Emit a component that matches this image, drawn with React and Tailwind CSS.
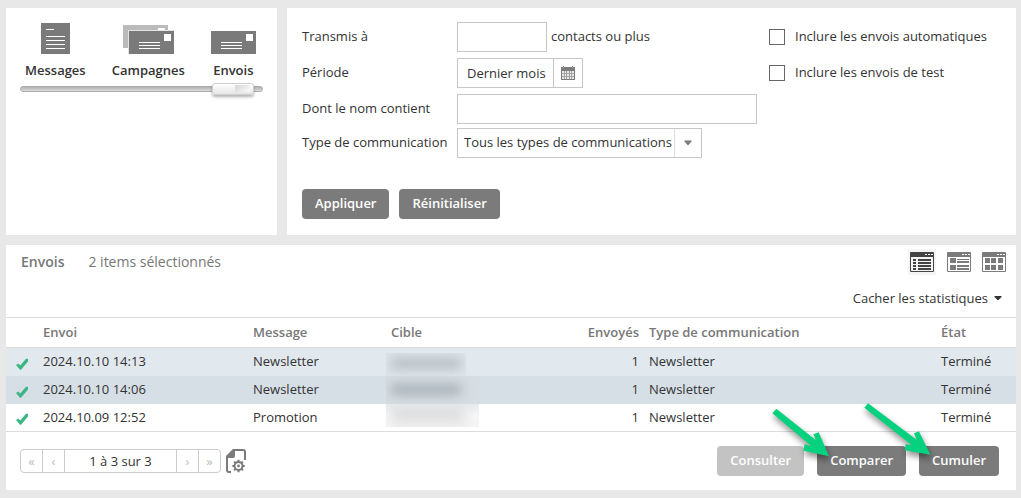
import clsx from "clsx";

const SENDINGS = [
  { date: "2024.10.10 14:13", message: "Newsletter", sent: 1, type: "Newsletter", state: "Terminé" },
  { date: "2024.10.10 14:06", message: "Newsletter", sent: 1, type: "Newsletter", state: "Terminé" },
  { date: "2024.10.09 12:52", message: "Promotion", sent: 1, type: "Newsletter", state: "Terminé" },
];

const ROW_BG = ["bg-[#e1e8ee]", "bg-[#d7dfe6]", "bg-white"];

// Hidden recipients: wash behind the name, then the blurred name itself
const TARGET_WASH = [
  "w-20 bg-[#dce2e6]/60",
  "w-[93px] bg-[#d6dde3]",
  "w-[93px] bg-linear-to-b from-[#e6eaed] via-[#f7f7f7] to-[#f3f3f3]",
];
const TARGET_BAR = ["w-[72px] bg-[#a3abb1]/70", "w-[72px] bg-[#929ba3]/70", "w-[76px] bg-[#b9b9b9]/50"];

function MessageIcon() {
  return (
    <svg width="29" height="31" viewBox="0 0 29 31" shapeRendering="crispEdges">
      <rect width="29" height="31" fill="#7a7a7a" />
      <path fill="#fff" d="M5 6h8v1H5zM5 13h19v1H5zM5 17h19v1H5zM5 21h19v1H5zM5 25h19v1H5z" />
    </svg>
  );
}

function CampaignIcon() {
  return (
    <svg width="51" height="29" viewBox="0 0 51 29" shapeRendering="crispEdges">
      <rect width="45" height="23" fill="#bbb" />
      <rect x="35" y="3" width="7" height="3" fill="#fff" />
      <rect x="5" y="5" width="46" height="24" fill="#e3e3e3" />
      <rect x="6" y="6" width="45" height="23" fill="#7a7a7a" />
      <path fill="#fff" d="M41 9h7v7h-7zM16 17h21v1H16zM16 20h21v1H16zM16 23h21v1H16z" />
    </svg>
  );
}

function SendingIcon() {
  return (
    <svg width="45" height="23" viewBox="0 0 45 23" shapeRendering="crispEdges">
      <rect width="45" height="23" fill="#7a7a7a" />
      <path fill="#fff" d="M35 3h7v7h-7zM10 11h21v1H10zM10 14h21v1H10zM10 17h21v1H10z" />
    </svg>
  );
}

function CalendarIcon() {
  return (
    <svg width="14" height="14" viewBox="0 0 14 14" shapeRendering="crispEdges">
      <path fill="#7d7d7d" d="M0 1h2V0h1v1h8V0h1v1h2v3H0z" />
      <path fill="#a9a9a9" d="M2 1h1v1H2zM11 1h1v1h-1z" />
      <rect y="4" width="14" height="10" fill="#7d7d7d" />
      <rect x="1" y="5" width="12" height="8" fill="#a5a5a5" />
      <path
        fill="#e6e6e6"
        d="M1 5h2v2H1zM4 5h1v2H4zM6 5h2v2H6zM9 5h1v2H9zM11 5h2v2h-2zM1 8h2v2H1zM4 8h1v2H4zM6 8h2v2H6zM9 8h1v2H9zM11 8h2v2h-2zM1 11h2v2H1zM4 11h1v2H4zM6 11h2v2H6zM9 11h1v2H9zM11 11h2v2h-2z"
      />
    </svg>
  );
}

function WindowIcon({ color, children }) {
  return (
    <svg width="24" height="20" viewBox="0 0 24 20" fill={color}>
      <path fillRule="evenodd" d="M1 0h22a1 1 0 0 1 1 1v18a1 1 0 0 1-1 1H1a1 1 0 0 1-1-1V1a1 1 0 0 1 1-1zM1 5v14h22V5z" />
      <path fill="#fff" d="M15 2h2v1h-2zM18 2h2v1h-2zM21 2h2v1h-2z" />
      {children}
    </svg>
  );
}

function CheckIcon() {
  return (
    <svg className="ml-[10px] mt-1" width="12" height="12" viewBox="0 0 12 12">
      <path fill="#3cb683" d="M0 7 2.4 5.6 4.2 7.6 10 0.8H12V3.4L5 11.8H4z" />
    </svg>
  );
}

function PageSettingsIcon() {
  return (
    <svg width="20" height="24" viewBox="0 0 20 24" fill="none" stroke="#7b7b7b">
      <path strokeWidth="2" d="M5 23H3a2 2 0 0 1-2-2V8L8 1h9a2 2 0 0 1 2 2v8" />
      <path fill="#7b7b7b" stroke="none" d="M0 9V7L7 0h2v7a2 2 0 0 1-2 2z" />
      <circle cx="12.5" cy="17" r="4" strokeWidth="2" />
      <circle cx="12.5" cy="17" r="1.4" fill="#7b7b7b" stroke="none" />
      <path
        strokeWidth="2"
        d="M12.5 10.8v2M12.5 21.2v2M6.3 17h2M16.7 17h2M8.1 12.6l1.4 1.4M15.5 20l1.4 1.4M8.1 21.4 9.5 20M15.5 14l1.4-1.4"
      />
    </svg>
  );
}

function Button({ children, disabled }) {
  return (
    <button
      type="button"
      disabled={disabled}
      className={clsx(
        "h-[30px] rounded px-[13px] font-semibold text-white",
        disabled ? "bg-[#c3c3c3]" : "bg-[#7b7b7b] hover:bg-[#6b6b6b]"
      )}
    >
      {children}
    </button>
  );
}

function TypeSwitch() {
  return (
    <section className="w-[271px] shrink-0 bg-white px-[14px] pt-[15px]">
      <div className="flex items-end gap-[26px] pl-[5px] font-semibold">
        <button type="button" className="flex flex-col items-center gap-[6px] leading-5">
          <MessageIcon />
          Messages
        </button>
        <button type="button" className="flex flex-col items-center gap-[6px] leading-5">
          <CampaignIcon />
          Campagnes
        </button>
        <button type="button" className="flex flex-col items-center gap-[6px] leading-5">
          <SendingIcon />
          Envois
        </button>
      </div>
      <input
        type="range"
        aria-label="Type de vue"
        min="0"
        max="100"
        defaultValue="96"
        className="mt-[2px] block h-[14px] w-full appearance-none bg-transparent [&::-webkit-slider-runnable-track]:h-[6px] [&::-webkit-slider-runnable-track]:rounded-full [&::-webkit-slider-runnable-track]:border [&::-webkit-slider-runnable-track]:border-[#adadad] [&::-webkit-slider-runnable-track]:bg-linear-to-b [&::-webkit-slider-runnable-track]:from-[#b0b0b0] [&::-webkit-slider-runnable-track]:to-[#dcdcdc] [&::-webkit-slider-thumb]:-mt-1 [&::-webkit-slider-thumb]:h-[12px] [&::-webkit-slider-thumb]:w-[42px] [&::-webkit-slider-thumb]:appearance-none [&::-webkit-slider-thumb]:rounded-[3px] [&::-webkit-slider-thumb]:border [&::-webkit-slider-thumb]:border-[#cfcfcf] [&::-webkit-slider-thumb]:bg-[linear-gradient(135deg,#d6d6d6,#fafafa),linear-gradient(#ffffff,#e6e6e6)] [&::-webkit-slider-thumb]:bg-[length:15px_7px,100%_100%] [&::-webkit-slider-thumb]:bg-[position:22px_1px,0_0] [&::-webkit-slider-thumb]:bg-no-repeat [&::-webkit-slider-thumb]:shadow-[0_2px_3px_rgba(0,0,0,0.3)]"
      />
    </section>
  );
}

function FieldRow({ id, label, children }) {
  return (
    <div className="flex h-[30px] items-center">
      <label htmlFor={id} className="w-[155px] shrink-0">
        {label}
      </label>
      {children}
    </div>
  );
}

function CheckField({ id, label }) {
  return (
    <div className="flex h-[30px] items-center gap-[10px]">
      <input id={id} type="checkbox" className="size-4 appearance-none border border-[#666] bg-white checked:bg-[#7b7b7b]" />
      <label htmlFor={id} className="whitespace-nowrap">{label}</label>
    </div>
  );
}

function Filters() {
  return (
    <section className="min-w-0 flex-1 bg-white px-[15px] pb-4 pt-[14px]">
      <div className="flex gap-3">
        <div>
          <div className="space-y-[6px]">
            <FieldRow id="contacts" label="Transmis à">
              <input id="contacts" type="text" className="h-[30px] w-[90px] border border-[#c6c6c6] px-2" />
              <span className="ml-1">contacts ou plus</span>
            </FieldRow>
            <FieldRow id="period" label="Période">
              <input
                id="period"
                type="text"
                defaultValue="Dernier mois"
                className="h-[30px] w-[96px] border border-r-0 border-[#c6c6c6] pl-[9px]"
              />
              <button
                type="button"
                aria-label="Choisir la période"
                className="flex h-[30px] w-[30px] items-center justify-center border border-[#c6c6c6]"
              >
                <CalendarIcon />
              </button>
            </FieldRow>
            <FieldRow id="name" label="Dont le nom contient">
              <input id="name" type="text" className="h-[30px] w-[300px] border border-[#c6c6c6] px-2" />
            </FieldRow>
          </div>
          <div className="mt-1">
            <FieldRow id="type" label="Type de communication">
              <div className="relative">
                <select id="type" className="h-[30px] w-[245px] appearance-none border border-[#c6c6c6] bg-white pl-[6px]">
                  <option>Tous les types de communications</option>
                </select>
                <span className="pointer-events-none absolute inset-y-px right-px flex w-[27px] items-center justify-center border-l border-[#dedede] bg-white">
                  <svg width="8" height="6" viewBox="0 0 8 6">
                    <path fill="#7b7b7b" d="M0.5 0.5h7v1L4.5 5h-1L0.5 1.5z" />
                  </svg>
                </span>
              </div>
            </FieldRow>
          </div>
        </div>
        <div className="space-y-[6px]">
          <CheckField id="auto" label="Inclure les envois automatiques" />
          <CheckField id="test" label="Inclure les envois de test" />
        </div>
      </div>
      <div className="mt-[31px] flex gap-[10px]">
        <Button>Appliquer</Button>
        <Button>Réinitialiser</Button>
      </div>
    </section>
  );
}

function ListHeader() {
  return (
    <header className="pl-[15px] pr-[10px] pt-1">
      <div className="flex items-center">
        <h2 className="text-sm font-semibold text-[#777]">Envois</h2>
        <p className="ml-6 text-sm text-[#777]">2 items sélectionnés</p>
        <div className="ml-auto flex items-center gap-[11px]">
          <button type="button" aria-label="Liste" className="bg-[#f5f5f5] px-[2px] py-[3px]">
            <WindowIcon color="#444">
              <path d="M3 7h3v2H3zM3 10h3v2H3zM3 13h3v2H3zM3 16h3v2H3zM8 7h13v2H8zM8 10h13v2H8zM8 13h13v2H8zM8 16h13v2H8z" />
            </WindowIcon>
          </button>
          <button type="button" aria-label="Détails">
            <WindowIcon color="#7b7b7b">
              <path d="M3 6h6v5H3zM3 13h6v5H3zM10 7h12v1H10zM10 9h12v2H10zM10 13h12v2H10zM10 16h12v2H10z" />
            </WindowIcon>
          </button>
          <button type="button" aria-label="Grille">
            <WindowIcon color="#7b7b7b">
              <path d="M3 6h5v5H3zM9 6h5v5H9zM16 6h5v5h-5zM3 13h5v5H3zM9 13h5v5H9zM16 13h5v5h-5z" />
            </WindowIcon>
          </button>
        </div>
      </div>
      <div className="flex justify-end pb-[11px] pr-1 pt-[15px]">
        <button type="button" className="flex items-center gap-[6px] leading-4">
          Cacher les statistiques
          <svg width="8" height="5" viewBox="0 0 8 5">
            <path fill="#333" d="M0.5 0h7v1L4.5 4h-1L0.5 1z" />
          </svg>
        </button>
      </div>
    </header>
  );
}

function SendingsTable() {
  return (
    <table className="w-full table-fixed text-left">
      <colgroup>
        <col className="w-[37px]" />
        <col className="w-[210px]" />
        <col className="w-[138px]" />
        <col />
        <col className="w-[80px]" />
        <col className="w-[292px]" />
        <col className="w-[75px]" />
      </colgroup>
      <thead>
        <tr className="h-[30px] border-y border-[#dcdcdc] text-[#777]">
          <td />
          <th className="font-semibold">Envoi</th>
          <th className="font-semibold">Message</th>
          <th className="font-semibold">Cible</th>
          <th className="pr-[10px] text-right font-semibold">Envoyés</th>
          <th className="font-semibold">Type de communication</th>
          <th className="font-semibold">État</th>
        </tr>
      </thead>
      <tbody className="border-b border-[#dcdcdc]">
        {SENDINGS.map((row, i) => (
          <tr key={row.date} className={clsx("h-7", ROW_BG[i])}>
            <td>
              <CheckIcon />
            </td>
            <td>{row.date}</td>
            <td>{row.message}</td>
            <td className={i === 0 ? "align-bottom" : "align-top"}>
              <div
                className={clsx(
                  "-ml-[5px] flex overflow-hidden pl-1",
                  i === 1 ? "h-7" : "h-[23px]",
                  i === 0 ? "items-start pt-[5px]" : "items-center",
                  TARGET_WASH[i]
                )}
              >
                <div className={clsx("h-[11px] rounded-full blur-[6px]", TARGET_BAR[i])} />
              </div>
            </td>
            <td className="pr-[10px] text-right">{row.sent}</td>
            <td>{row.type}</td>
            <td>{row.state}</td>
          </tr>
        ))}
      </tbody>
    </table>
  );
}

function Pager() {
  return (
    <nav className="flex h-6 divide-x divide-[#ccc] rounded border border-[#ccc] text-[#bbb]">
      <button type="button" className="w-[22px] leading-none">«</button>
      <button type="button" className="w-[22px] leading-none">‹</button>
      <span className="w-[112px] text-center leading-[22px] text-[#333]">1 à 3 sur 3</span>
      <button type="button" className="w-[22px] leading-none">›</button>
      <button type="button" className="w-[21px] leading-none">»</button>
    </nav>
  );
}

export default function App() {
  return (
    <div className="min-h-screen bg-[#e8e8e8] py-2 pl-[6px] pr-[5px] font-['Open_Sans',sans-serif] text-[13px] text-[#333]">
      <div className="flex gap-[10px]">
        <TypeSwitch />
        <Filters />
      </div>

      <section className="mt-[10px] bg-white">
        <ListHeader />
        <SendingsTable />
        <footer className="flex items-center py-[14px] pl-[14px] pr-[17px]">
          <div className="flex items-center gap-[5px]">
            <Pager />
            <button type="button" aria-label="Paramètres de page">
              <PageSettingsIcon />
            </button>
          </div>
          <div className="ml-auto flex gap-[13px]">
            <Button disabled>Consulter</Button>
            <div className="relative">
              <Button>Comparer</Button>
              <svg
                className="pointer-events-none absolute -left-[47px] -top-[40px] overflow-visible drop-shadow-[1px_4px_3px_rgba(0,0,0,0.45)]"
                width="60"
                height="52"
                viewBox="210 48 180 156"
              >
                <path fill="#06d17e" d="M229 56 348 151 340 133 356 127 387 199 310 182 314 163 334 168 217 70z" />
              </svg>
            </div>
            <div className="relative">
              <Button>Cumuler</Button>
              <svg
                className="pointer-events-none absolute -left-[57px] -top-[45px] overflow-visible drop-shadow-[1px_4px_3px_rgba(0,0,0,0.45)]"
                width="72"
                height="57"
                viewBox="486 33 216 171"
              >
                <path fill="#06d17e" d="M504 40 650 149 642 130 657 124 691 194 614 181 617 163 636 166 493 53z" />
              </svg>
            </div>
          </div>
        </footer>
      </section>
    </div>
  );
}
